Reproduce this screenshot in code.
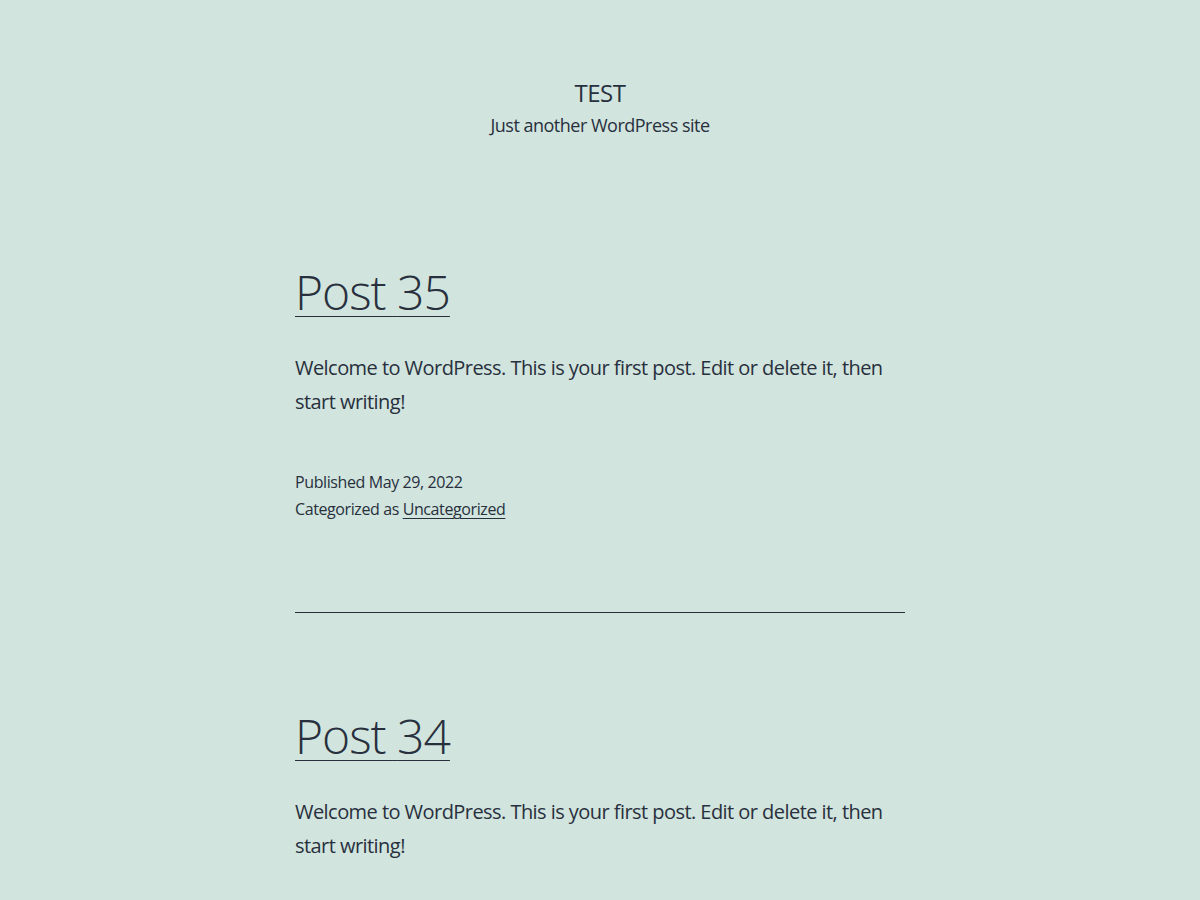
import React from 'react';

const posts = [
  { id: 35, date: 'May 29, 2022' },
  { id: 34, date: 'May 29, 2022' },
  { id: 33, date: 'May 29, 2022' },
];

const font = { fontFamily: '"Open Sans", "Noto Sans", sans-serif' };

export default function App() {
  return (
    <div className="min-h-screen bg-[#d1e4dd] text-[#28303d]" style={font}>
      {/* Header */}
      <header className="pt-[77px] text-center">
        <p className="text-[24px] leading-[31px] uppercase tracking-[-0.5px]">Test</p>
        <p className="mt-[4px] text-[18px] leading-[26px] tracking-[-0.5px]">Just another WordPress site</p>
      </header>

      <main className="mx-auto w-[610px] pt-[123px]">
        {posts.map((post, i) => (
          <article key={post.id}>
            {i > 0 && <div className="mt-[89px] mb-[92px] h-px bg-[#28303d]" />}
            <h2 className="text-[48px] leading-[62px] font-light tracking-[-1px]">
              <a href="#" className="underline decoration-1 underline-offset-[6px]">
                Post {post.id}
              </a>
            </h2>
            <p className="mt-[28px] text-[20px] leading-[34px] tracking-[-0.55px]">
              Welcome to WordPress. This is your first post. Edit or delete it, then start writing!
            </p>
            <div className="mt-[50px] text-[16px] leading-[27px] tracking-[-0.4px]">
              <p>Published {post.date}</p>
              <p>
                Categorized as{' '}
                <a href="#" className="underline decoration-1 underline-offset-[3px]">
                  Uncategorized
                </a>
              </p>
            </div>
          </article>
        ))}
      </main>
    </div>
  );
}
